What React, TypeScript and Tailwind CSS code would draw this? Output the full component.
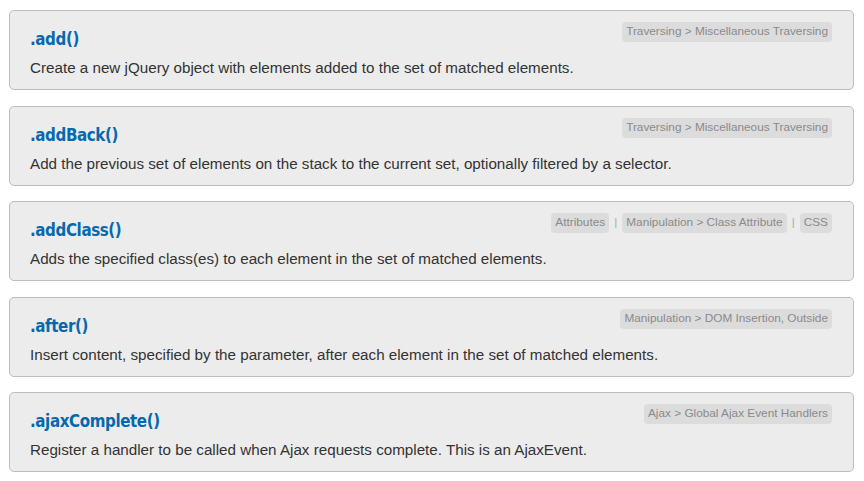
import React from 'react'

interface Entry {
  name: string
  desc: string
  cats: string[]
}

const entries: Entry[] = [
  {
    name: '.add()',
    desc: 'Create a new jQuery object with elements added to the set of matched elements.',
    cats: ['Traversing > Miscellaneous Traversing'],
  },
  {
    name: '.addBack()',
    desc: 'Add the previous set of elements on the stack to the current set, optionally filtered by a selector.',
    cats: ['Traversing > Miscellaneous Traversing'],
  },
  {
    name: '.addClass()',
    desc: 'Adds the specified class(es) to each element in the set of matched elements.',
    cats: ['Attributes', 'Manipulation > Class Attribute', 'CSS'],
  },
  {
    name: '.after()',
    desc: 'Insert content, specified by the parameter, after each element in the set of matched elements.',
    cats: ['Manipulation > DOM Insertion, Outside'],
  },
  {
    name: '.ajaxComplete()',
    desc: 'Register a handler to be called when Ajax requests complete. This is an AjaxEvent.',
    cats: ['Ajax > Global Ajax Event Handlers'],
  },
]

export default function App() {
  return (
    <main className="min-h-screen bg-white px-[9px] pt-[10px] font-['Liberation_Sans',Arial,sans-serif]">
      <div className="flex w-[845px] flex-col gap-[15.5px]">
        {entries.map(e => (
          <article
            key={e.name}
            className="rounded-[5px] border border-[#bcbcbc] bg-[#ececec] pb-[11px] pl-5 pr-[21px] pt-[11px]"
          >
            <div className="flex items-start justify-between">
              <h2 className="mt-[5px] font-['DejaVu_Sans_Condensed','DejaVu_Sans',sans-serif] text-[16.8px] font-bold leading-6 tracking-[-0.4px] text-[#0769ad]">
                {e.name}
              </h2>
              <div className="flex items-center text-[11.8px] text-[#8a8a8a]">
                {e.cats.map((c, i) => (
                  <React.Fragment key={c}>
                    {i > 0 && <span className="px-[5px] text-[#aaa]">|</span>}
                    <span className="flex h-5 items-center rounded-[4px] bg-[#dcdcdc] px-1">{c}</span>
                  </React.Fragment>
                ))}
              </div>
            </div>
            <p className="mt-[7px] text-[15.2px] leading-5 text-[#333]">{e.desc}</p>
          </article>
        ))}
      </div>
    </main>
  )
}
